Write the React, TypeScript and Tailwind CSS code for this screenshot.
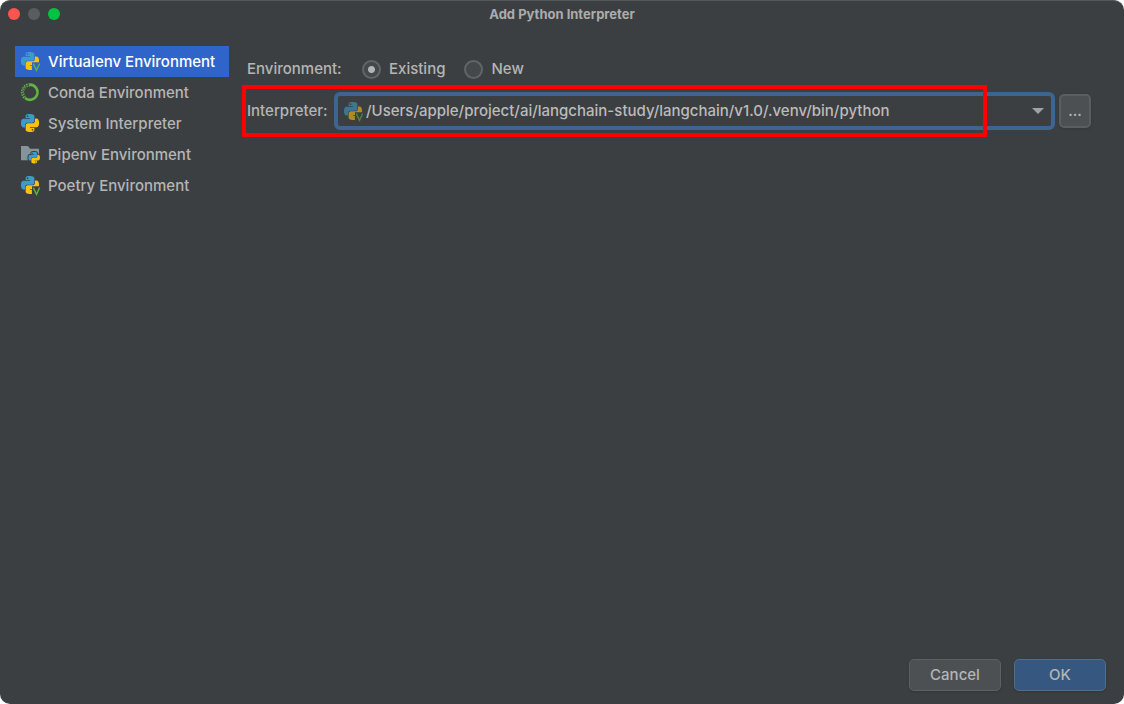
import React, { useState } from 'react';

const snake =
  'M14.25.18l.9.2.73.26.59.3.45.32.34.34.25.34.16.33.1.3.04.26.02.2-.01.13V8.5l-.05.63-.13.55-.21.46-.26.38-.3.31-.33.25-.35.19-.35.14-.33.1-.3.07-.26.04-.21.02H8.77l-.69.05-.59.14-.5.22-.41.27-.33.32-.27.35-.2.36-.15.37-.1.35-.07.32-.04.27-.02.21v3.06H3.17l-.21-.03-.28-.07-.32-.12-.35-.18-.36-.26-.36-.36-.35-.46-.32-.59-.28-.73-.21-.88-.14-1.05-.05-1.23.06-1.22.16-1.04.24-.87.32-.71.36-.57.4-.44.42-.33.42-.24.4-.16.36-.1.32-.05.24-.01h.16l.06.01h8.16v-.83H6.18l-.01-2.75-.02-.37.05-.34.11-.31.17-.28.25-.26.31-.23.38-.2.44-.18.51-.15.58-.12.64-.1.71-.06.77-.04.84-.02 1.27.05zm-6.3 1.98l-.23.33-.08.41.08.41.23.34.33.22.41.09.41-.09.33-.22.23-.34.08-.41-.08-.41-.23-.33-.33-.22-.41-.09-.41.09z';

const Snakes: React.FC = () => (
  <>
    <path d={snake} fill="#3f9acb" />
    <path d={snake} fill="#f9c00c" transform="rotate(180 12 12)" />
  </>
);

const PythonIcon: React.FC = () => (
  <svg viewBox="0 0 20 20" className="size-5 shrink-0" aria-hidden="true">
    <g transform="translate(1 0) scale(.75)">
      <Snakes />
    </g>
  </svg>
);

const VenvIcon: React.FC<{ className?: string }> = ({ className = '' }) => (
  <svg viewBox="0 0 20 20" className={`size-5 shrink-0 ${className}`} aria-hidden="true">
    <clipPath id="venv-cut">
      <path d="M0 0H20V10.3H12V20H0Z" />
    </clipPath>
    <g clipPath="url(#venv-cut)">
      <g transform="translate(1 0) scale(.75)">
        <Snakes />
      </g>
    </g>
    <path d="M13.3 11.6L16.5 18.4L19.7 11.6" fill="none" stroke="#59b33c" strokeWidth="1.4" />
  </svg>
);

const CondaIcon: React.FC = () => (
  <svg viewBox="0 0 20 20" className="size-5 shrink-0" fill="none" stroke="#5fb442" aria-hidden="true">
    <path d="M10 1.6A7.6 7.6 0 1 1 5 15" strokeWidth="2.6" />
    <path d="M10 1A8.2 8.2 0 0 0 4.5 15.4" strokeWidth="1.5" strokeDasharray="1.6 .9" />
    <path d="M10 2.8A6.4 6.4 0 0 0 5.6 14" strokeWidth="1.5" strokeDasharray="1.3 1" />
  </svg>
);

const PipenvIcon: React.FC = () => (
  <svg viewBox="0 0 20 20" className="size-5 shrink-0" aria-hidden="true">
    <path d="M1 1H8L10 3.7H19V15.3H1Z" fill="#87939a" />
    <g transform="translate(8.4 6.9) scale(.48)">
      <path d={snake} fill="#3c3f41" stroke="#3c3f41" strokeWidth="4" />
      <path d={snake} fill="#3c3f41" stroke="#3c3f41" strokeWidth="4" transform="rotate(180 12 12)" />
      <Snakes />
    </g>
  </svg>
);

const kinds = [
  { name: 'Virtualenv Environment', icon: <VenvIcon /> },
  { name: 'Conda Environment', icon: <CondaIcon /> },
  { name: 'System Interpreter', icon: <PythonIcon /> },
  { name: 'Pipenv Environment', icon: <PipenvIcon /> },
  { name: 'Poetry Environment', icon: <VenvIcon /> },
];

const radioClass =
  'size-[19px] appearance-none rounded-full border-2 border-[#626566] bg-[#43484a] checked:bg-[radial-gradient(circle,#b4b4b4_3px,#43484a_4px)]';

export default function App() {
  const [kind, setKind] = useState(kinds[0].name);
  const [mode, setMode] = useState('existing');

  return (
    <div className="min-h-screen bg-white">
      <div className="flex min-h-screen flex-col overflow-hidden rounded-[10px] border-t border-[#555859] bg-[#3c3f41] font-[Inter,sans-serif] text-[15px] leading-6 font-medium text-[#b5b5b5]">
        {/* Title bar */}
        <header className="relative flex h-[26px] shrink-0 items-center justify-center">
          <div className="absolute left-2 flex gap-2">
            <button aria-label="Close" className="size-3 rounded-full bg-[#ff544d]" />
            <button aria-label="Minimize" className="size-3 rounded-full bg-[#5a5c5e]" />
            <button aria-label="Zoom" className="size-3 rounded-full bg-[#00c441]" />
          </div>
          <h1 className="text-[13px] leading-5 font-bold text-[#abacad]">Add Python Interpreter</h1>
        </header>

        <main className="flex flex-1 gap-[18px] pt-[19px] pr-[33px] pl-[15px]">
          {/* Environment kinds */}
          <nav className="flex w-[214px] shrink-0 flex-col">
            {kinds.map(item => (
              <button
                key={item.name}
                onClick={() => setKind(item.name)}
                className={`flex h-[31px] items-center gap-2 pl-[5px] text-left whitespace-nowrap ${
                  item.name === kind ? 'bg-[#2f65ca] text-white' : ''
                }`}
              >
                {item.icon}
                {item.name}
              </button>
            ))}
          </nav>

          {/* Settings */}
          <div className="min-w-0 flex-1 pt-[11px]">
            <div className="flex h-6 items-center">
              <span className="w-[115px]">Environment:</span>
              <label className="mr-[19px] flex items-center gap-2">
                <input type="radio" name="mode" checked={mode === 'existing'} onChange={() => setMode('existing')} className={radioClass} />
                Existing
              </label>
              <label className="flex items-center gap-2">
                <input type="radio" name="mode" checked={mode === 'new'} onChange={() => setMode('new')} className={radioClass} />
                New
              </label>
            </div>

            <div className="relative mt-[11px] flex items-center">
              <label htmlFor="interpreter" className="w-[87px] shrink-0">
                Interpreter:
              </label>
              <div className="relative min-w-0 flex-1">
                <select
                  id="interpreter"
                  className="h-[38px] w-full appearance-none rounded-[6px] border-4 border-[#3d6590] bg-[#3c3f41] pl-7 text-[#bbbbbb] outline-none"
                >
                  <option>/Users/apple/project/ai/langchain-study/langchain/v1.0/.venv/bin/python</option>
                </select>
                <VenvIcon className="pointer-events-none absolute top-[10px] left-[9px] opacity-60" />
                <svg viewBox="0 0 12 6" className="pointer-events-none absolute top-4 right-[11px] h-[6px] w-3" aria-hidden="true">
                  <path d="M0 0H12L6 6Z" fill="#9fa2a5" />
                </svg>
              </div>
              <button
                aria-label="Browse"
                className="ml-1 h-[34px] w-8 rounded-[5px] border-2 border-[#5b5e5f] bg-[#4c5052] shadow-sm"
              >
                ...
              </button>
              {/* Highlight frame */}
              <div className="pointer-events-none absolute -top-[7px] right-[104px] -left-[5px] h-[52px] border-4 border-[#ff0000]" />
            </div>
          </div>
        </main>

        <footer className="flex justify-end gap-[13px] pr-[18px] pb-[13px]">
          <button className="h-8 w-[92px] rounded-[5px] border border-[#5e6162] bg-[#4c5052] shadow-sm">Cancel</button>
          <button className="h-8 w-[92px] rounded-[5px] border border-[#4c708c] bg-[#365880] shadow-sm">OK</button>
        </footer>
      </div>
    </div>
  );
}
